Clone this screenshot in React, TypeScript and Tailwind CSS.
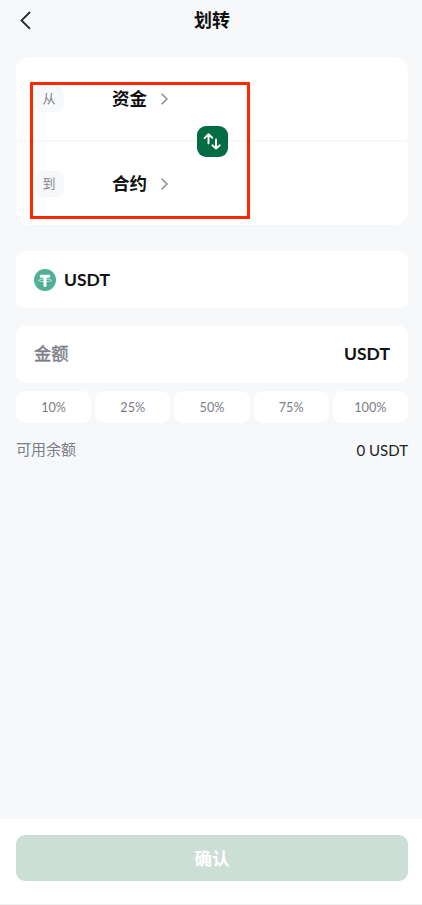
import type { ReactNode } from 'react';

const cjk = "font-['Noto_Sans_CJK_SC',sans-serif]";
const latin = "font-['Lato','Noto_Sans_CJK_SC',sans-serif]";

function ChevronRight() {
  return (
    <svg className="ml-[14px] shrink-0" width="7" height="12" viewBox="0 0 7 12" fill="none" stroke="#85858e" strokeWidth="1.4">
      <path d="M0.6 0.8 L6 6 L0.6 11.2" />
    </svg>
  );
}

function AccountRow({ label, account, className }: { label: string; account: string; className: string }) {
  return (
    <button className={`flex w-full items-center bg-white pl-[18px] ${className}`}>
      <span className="flex h-[26px] w-[30px] items-center justify-center rounded-lg bg-[#f7f8fa] pb-[2px] text-[13px] text-[#85858d]">
        {label}
      </span>
      <span className="ml-[48px] pb-[2px] text-[17.5px] leading-6 font-bold text-[#111]">{account}</span>
      <ChevronRight />
    </button>
  );
}

function SwapButton() {
  return (
    <button aria-label="交换" className="absolute top-[69px] left-[181px] flex size-[30.5px] items-center justify-center rounded-[9px] bg-[#046c42]">
      <svg width="31" height="31" viewBox="0 0 31 31" className="shrink-0" fill="none" stroke="#fff" strokeWidth="1.9" strokeLinecap="round" strokeLinejoin="round">
        <path d="M7.6 12.1 L11.5 8.2 L15.2 11.8 M11.5 8.4 V17.4" />
        <path d="M15.4 19.3 L19 22.6 L22.8 19.3 M19 22.4 V13.5" />
      </svg>
    </button>
  );
}

function TetherIcon() {
  return (
    <svg width="22" height="22" viewBox="0 0 22 22" className="shrink-0">
      <circle cx="11" cy="11" r="11" fill="#50af95" />
      <path d="M5.9 5.8 H16.1 V8.7 H12.5 V17.8 H9.5 V8.7 H5.9 Z" fill="#fff" />
      <path d="M9.5 10.2 C2.5 10.6 2.5 12.4 11 12.7 C19.5 12.4 19.5 10.6 12.5 10.2" fill="none" stroke="#fff" strokeWidth="0.7" strokeOpacity="0.85" />
    </svg>
  );
}

function Panel({ children }: { children: ReactNode }) {
  return <div className="flex h-[57px] items-center rounded-[9px] bg-white px-[18px]">{children}</div>;
}

export default function App() {
  return (
    <div className={`relative flex h-[905px] w-[422px] flex-col overflow-hidden bg-[#f7f8fa] ${cjk}`}>
      <header className="grid h-[57px] shrink-0 grid-cols-[1fr_auto_1fr] items-start px-5">
        <button aria-label="返回" className="mt-[11px] w-3">
          <svg width="12" height="19" viewBox="0 0 12 19" fill="none" stroke="#25272d" strokeWidth="1.9">
            <path d="M10 1 L1.6 9.4 L10 17.8" />
          </svg>
        </button>
        <h1 className="mt-[5px] pl-[2px] text-[18px] leading-7 font-bold text-[#111]">划转</h1>
      </header>

      <main className="flex grow flex-col pr-[14px] pl-4">
        <section className="relative flex flex-col gap-[2px]">
          <AccountRow label="从" account="资金" className="h-[83px] rounded-t-[14px] rounded-b-[4px]" />
          <AccountRow label="到" account="合约" className="h-[83px] rounded-t-[4px] rounded-b-[14px]" />
          <SwapButton />
        </section>

        <div className="mt-[26px] flex flex-col gap-[18px]">
          <Panel>
            <TetherIcon />
            <span className={`ml-2 pt-[2px] text-[17.5px] font-bold text-[#111] ${latin}`}>USDT</span>
          </Panel>
          <Panel>
            <span className="pb-[3px] text-[17.3px] text-[#7c7e87] [-webkit-text-stroke:0.4px_#7c7e87]">金额</span>
            <span className={`ml-auto text-[17.5px] font-bold text-[#111] ${latin}`}>USDT</span>
          </Panel>
        </div>

        <div className="mt-[8px] grid grid-cols-5 gap-[4px]">
          {['10%', '25%', '50%', '75%', '100%'].map((value) => (
            <button key={value} className={`h-[32px] rounded-[9px] bg-white pt-[2px] text-[12.7px] text-[#7c7e87] ${latin}`}>
              {value}
            </button>
          ))}
        </div>

        <div className="mt-[14px] flex h-6 items-center justify-between text-[15px]">
          <span className="text-[#7c7e87]">可用余额</span>
          <span className={`pt-[2px] text-[#222] ${latin}`}>0 USDT</span>
        </div>
      </main>

      <footer className="h-[86px] shrink-0 border-b border-[#f0f0f1] bg-white pt-[16px] pr-[14px] pl-4">
        <button className="h-[46px] w-full rounded-[9px] bg-[#ccdfd6] text-[17.5px] font-bold text-white">确认</button>
      </footer>

      <div className="pointer-events-none absolute top-[82px] left-[30px] h-[137px] w-[220px] border-[3px] border-[#ff2600]" />
    </div>
  );
}
